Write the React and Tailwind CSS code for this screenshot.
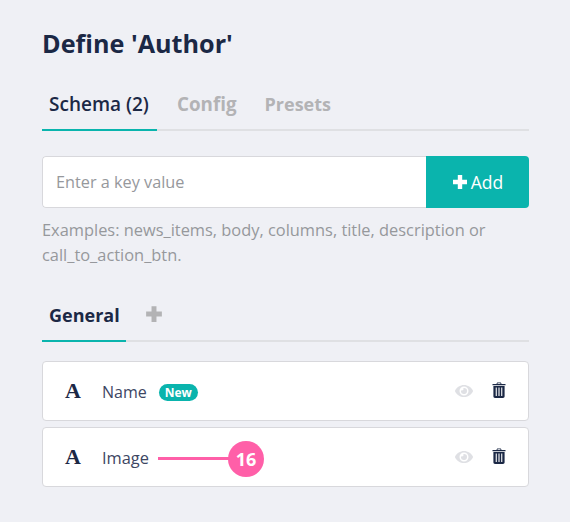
import React from "react";
import { FaEye } from "react-icons/fa";

function Plus({ className }) {
  return (
    <svg viewBox="0 0 16 16" className={className} fill="currentColor">
      <path d="M5.8 1h4.4v4.8H15v4.4h-4.8V15H5.8v-4.8H1V5.8h4.8z" />
    </svg>
  );
}

function Trash({ className }) {
  return (
    <svg viewBox="0 0 14 16" className={className} fill="currentColor">
      <path fillRule="evenodd" d="M4.4 2 5.2.4h3.6L9.6 2H13.5v1.3H.5V2zM5.7 1.2 5.4 2h3.2l-.3-.8zM1.4 4h11.2v10.3c0 .9-.7 1.7-1.6 1.7H3c-.9 0-1.6-.8-1.6-1.7zM3.7 5.6v8.4h1.1V5.6zM6.45 5.6v8.4h1.1V5.6zM9.2 5.6v8.4h1.1V5.6z" />
    </svg>
  );
}

function Row({ label, isNew, shift, children }) {
  return (
    <div className="relative flex h-[60px] items-center rounded-[4px] border border-[#d8d8dc] bg-white pl-[22px] pr-[22px]">
      <span className="w-[37px] font-['Liberation_Serif',serif] text-[22px] font-bold leading-none text-[#1b2845]">A</span>
      <span className={shift ? "mt-[3px] text-[16.4px] text-[#3d4663]" : "mt-[1px] text-[16px] text-[#3d4663]"}>{label}</span>
      {isNew && (
        <span className="ml-[12px] mt-[2px] rounded-full bg-[#0ab4ad] px-[6px] text-[12px] font-bold leading-[17px] text-white">New</span>
      )}
      <div className="ml-auto flex items-center gap-[19px]">
        <FaEye className="h-[18px] w-[18px] text-[#dfe0e4]" />
        <Trash className="-mt-[3px] h-[16px] w-[14px] text-[#1b2845]" />
      </div>
      {children}
    </div>
  );
}

export default function App() {
  return (
    <div className="h-[522px] w-[570px] bg-[#eff0f5] pl-[42px] pr-[41px] pt-[27px] font-['Open_Sans',sans-serif]">
      <h1 className="text-[25.2px] font-bold leading-[32px] text-[#1b2845]">Define 'Author'</h1>

      <div className="mt-[26px] flex h-[46px] border-b-2 border-[#dfe0e3]">
        <div className="-mb-[2px] h-[46px] w-[115px] border-b-2 border-[#0ab4ad] pl-[7px] pt-[7px] text-[19px] font-semibold leading-[24px] text-[#1b2845]">Schema (2)</div>
        <div className="ml-[20px] pt-[7px] text-[18.8px] font-bold leading-[24px] text-[#b3b3b5]">Config</div>
        <div className="ml-[28px] pt-[7px] text-[18px] font-bold leading-[24px] text-[#b3b3b5]">Presets</div>
      </div>

      <div className="mt-[25px] flex h-[52px] overflow-hidden rounded-[4px]">
        <div className="flex flex-1 items-center rounded-l-[4px] border border-r-0 border-[#d8d8dc] bg-white pl-[13px] text-[16.25px] text-[#96989c]">Enter a key value</div>
        <div className="flex w-[103px] items-center justify-center gap-[3px] bg-[#0ab4ad] text-[17.5px] text-white">
          <Plus className="h-[16px] w-[16px]" />
          <span>Add</span>
        </div>
      </div>

      <p className="mt-[9px] text-[16.4px] leading-[25px] text-[#96989c]">
        Examples: news_items, body, columns, title, description or call_to_action_btn.
      </p>

      <div className="mt-[29px] flex h-[46px] items-start border-b-2 border-[#dfe0e3]">
        <div className="-mb-[2px] h-[46px] w-[84px] border-b-2 border-[#0ab4ad] pl-[7px] pt-[7px] text-[18px] font-bold leading-[24px] text-[#1b2845]">General</div>
        <Plus className="ml-[19px] mt-[9px] h-[18px] w-[18px] text-[#b3b3b5]" />
      </div>

      <div className="mt-[19px] flex flex-col gap-[6px]">
        <Row label="Name" isNew />
        <Row label="Image" shift>
          <div className="absolute left-[115px] top-[29px] h-[3px] w-[72px] bg-[#ff5fa8]" />
          <div className="absolute left-[185px] top-[13px] flex h-[36px] w-[36px] items-center justify-center rounded-full bg-[#ff5fa8] text-[18px] font-bold text-white">16</div>
        </Row>
      </div>
    </div>
  );
}
